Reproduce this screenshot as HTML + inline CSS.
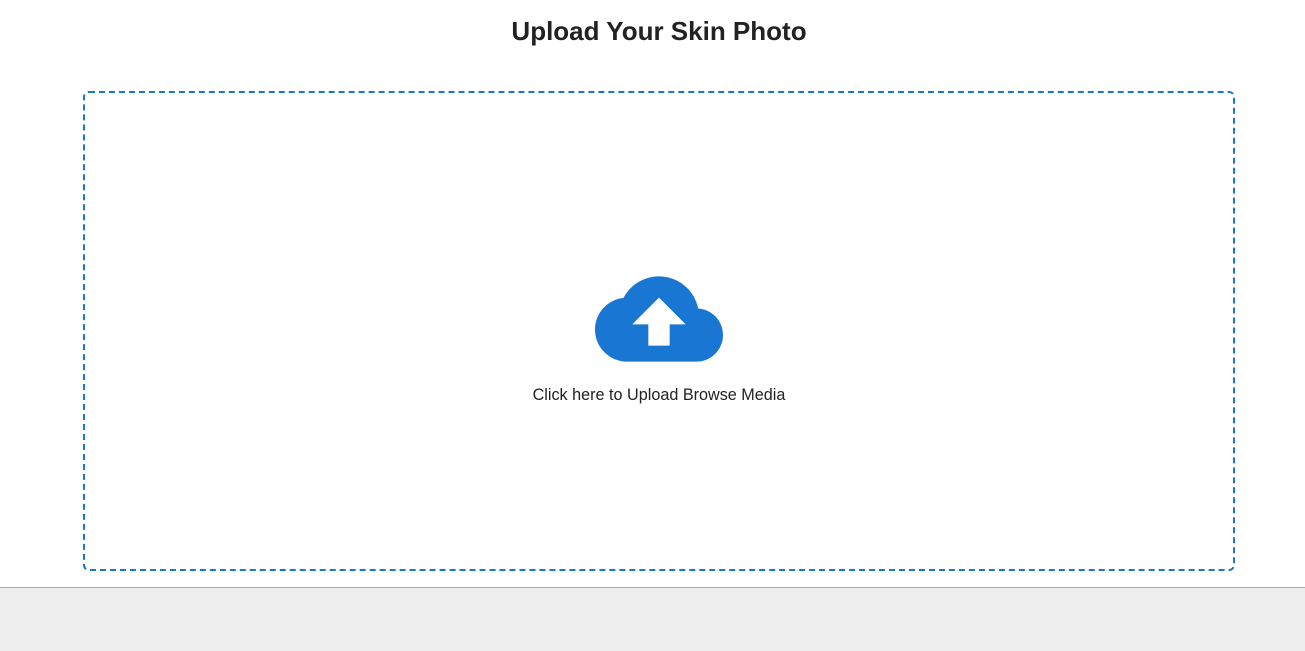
<!DOCTYPE html>
<html><head><style>
html,body{margin:0;padding:0;width:1305px;height:650px;overflow:hidden;background:#fff;font-family:"Liberation Sans",Arial,sans-serif;}
h1{position:absolute;left:0;width:1318px;top:14px;margin:0;text-align:center;font-size:26px;font-weight:bold;color:#222;line-height:34px;}
.box{position:absolute;left:83px;top:91px;width:1148px;height:476px;border:2px dashed #1976d2;border-radius:6px;}
svg{position:absolute;left:595px;top:255px;}
.t{position:absolute;left:0;width:1318px;top:386px;text-align:center;font-size:16.2px;color:#222;line-height:18px;}
.foot{position:absolute;left:0;top:587px;width:1305px;height:63px;background:#eee;border-top:1px solid #aaa;}
</style></head><body>
<h1>Upload Your Skin Photo</h1>
<div class="box"></div>
<svg width="128" height="128" viewBox="0 0 24 24"><path fill="#1976d2" d="M19.35 10.04C18.67 6.59 15.64 4 12 4 9.11 4 6.6 5.64 5.35 8.04 2.34 8.36 0 10.910 0 14c0 3.31 2.69 6 6 6h13c2.76 0 5-2.24 5-5 0-2.64-2.05-4.78-4.65-4.96z"/><path fill="#fff" d="M14 13v4h-4v-4H7l5-5 5 5h-3z"/></svg>
<div class="t">Click here to Upload Browse Media</div>
<div class="foot"></div>
</body></html>
